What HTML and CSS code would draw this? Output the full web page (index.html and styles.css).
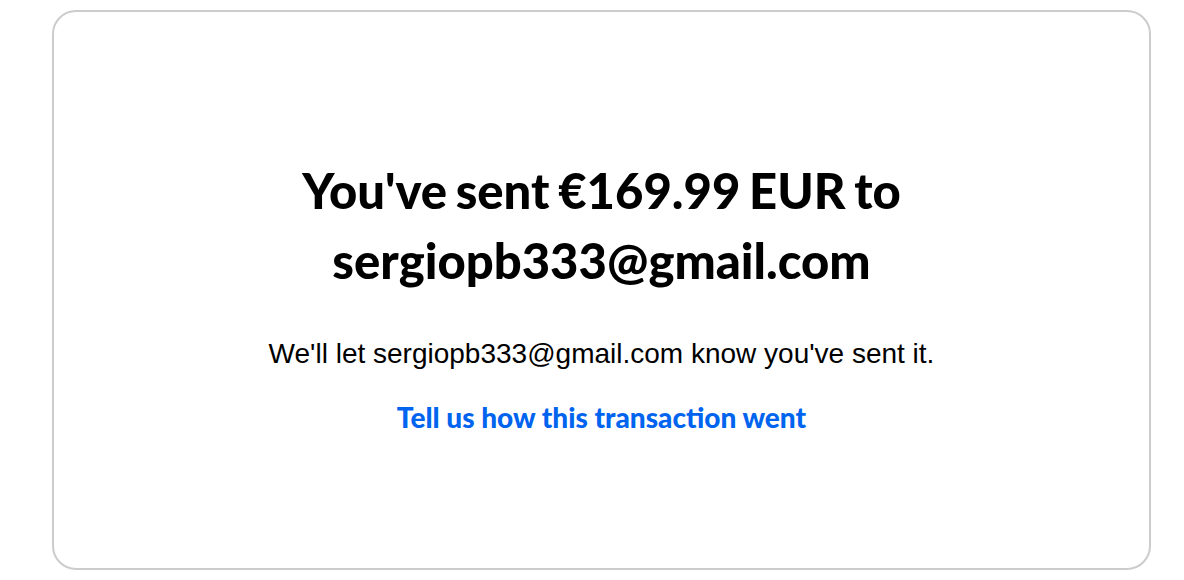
FILE: index.html
```html
<!DOCTYPE html>
<html lang="en">
<head>
<meta charset="utf-8">
<title>Sent</title>
<link rel="stylesheet" href="styles.css">
</head>
<body>
<main class="card">
  <h1 class="title">You've sent €169.99 EUR to<br>sergiopb333@gmail.com</h1>
  <p class="note">We'll let sergiopb333@gmail.com know you've sent it.</p>
  <a class="link" href="#">Tell us how this transaction went</a>
</main>
</body>
</html>
```
FILE: styles.css
```css
html, body {
  margin: 0;
  padding: 0;
  background: #ffffff;
}
body {
  padding: 10px 33px 10px 52px;
  box-sizing: border-box;
  height: 580px;
}
.card {
  box-sizing: border-box;
  height: 560px;
  border: 2px solid #cccccc;
  border-radius: 24px;
  display: flex;
  flex-direction: column;
  align-items: center;
  padding-top: 143px;
}
.title {
  margin: 0;
  font-family: "Lato", sans-serif;
  font-weight: 900;
  font-size: 49px;
  line-height: 70px;
  text-align: center;
  color: #000000;
  letter-spacing: 0;
  word-spacing: -3px;
}
.note {
  margin: 43px 0 0;
  font-family: "Liberation Sans", Arial, sans-serif;
  font-size: 28px;
  line-height: 32px;
  color: #000000;
}
.link {
  margin-top: 30px;
  font-family: "Lato", sans-serif;
  font-weight: 900;
  font-size: 28px;
  line-height: 34px;
  color: #0064ef;
  text-decoration: none;
}
```
